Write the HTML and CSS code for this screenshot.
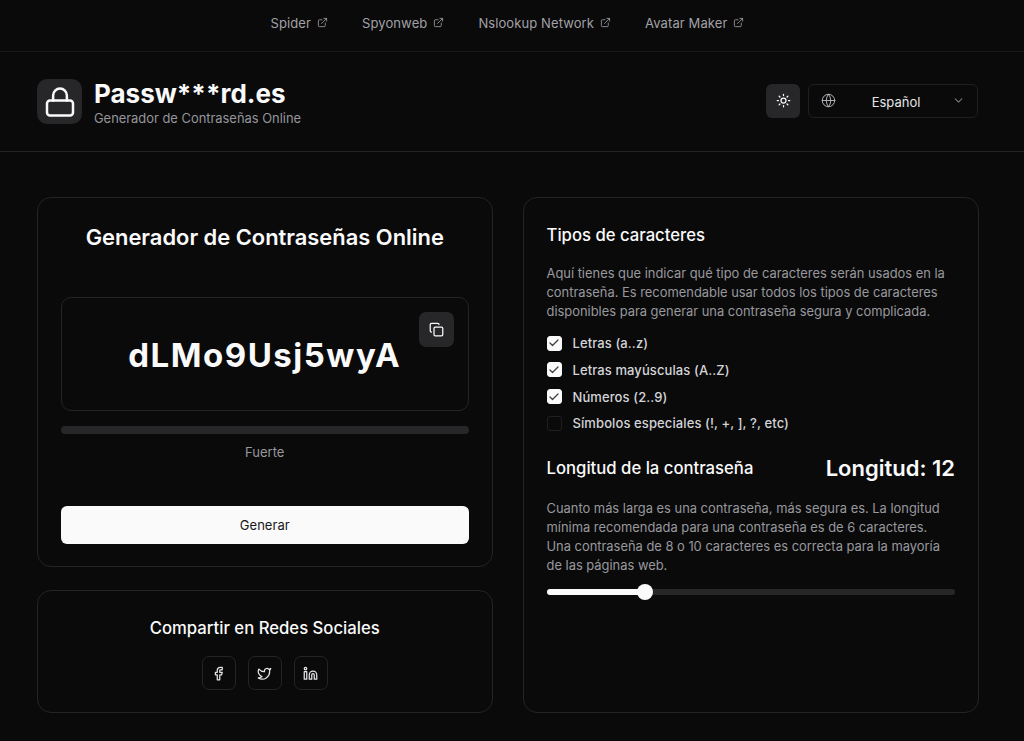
FILE: index.html
```html
<!DOCTYPE html>
<html lang="es">
  <head>
    <meta charset="UTF-8" />
    <meta name="viewport" content="width=device-width, initial-scale=1.0" />
    <title>Passw***rd.es</title>
    <link rel="stylesheet" href="styles.css">
  </head>
  <body>
    <nav class="topbar">
      <a class="toplink">Spider <svg viewBox="0 0 24 24"><path d="M18 13v6a2 2 0 0 1-2 2H5a2 2 0 0 1-2-2V8a2 2 0 0 1 2-2h6M15 3h6v6M10 14 21 3"/></svg></a>
      <a class="toplink">Spyonweb <svg viewBox="0 0 24 24"><path d="M18 13v6a2 2 0 0 1-2 2H5a2 2 0 0 1-2-2V8a2 2 0 0 1 2-2h6M15 3h6v6M10 14 21 3"/></svg></a>
      <a class="toplink">Nslookup Network <svg viewBox="0 0 24 24"><path d="M18 13v6a2 2 0 0 1-2 2H5a2 2 0 0 1-2-2V8a2 2 0 0 1 2-2h6M15 3h6v6M10 14 21 3"/></svg></a>
      <a class="toplink">Avatar Maker <svg viewBox="0 0 24 24"><path d="M18 13v6a2 2 0 0 1-2 2H5a2 2 0 0 1-2-2V8a2 2 0 0 1 2-2h6M15 3h6v6M10 14 21 3"/></svg></a>
    </nav>

    <header class="header">
      <div class="brand">
        <div class="brand_icon">
          <svg viewBox="0 0 24 24"><rect x="1.600" y="10.800" width="20.800" height="12" rx="2.400"/><path d="M6.500 10.800V6.700a5.500 5.500 0 0 1 11 0v4.100"/></svg>
        </div>
        <div>
          <div class="brand_name">Passw***rd.es</div>
          <div class="brand_sub">Generador de Contraseñas Online</div>
        </div>
      </div>
      <div class="header_tools">
        <button class="theme_btn">
          <svg viewBox="0 0 24 24"><circle cx="12" cy="12" r="4"/><path d="M12 2v2M12 20v2M4.930 4.930l1.410 1.410M17.660 17.660l1.410 1.410M2 12h2M20 12h2M6.340 17.660l-1.410 1.410M19.070 4.930l-1.410 1.410"/></svg>
        </button>
        <div class="lang">
          <svg class="lang_globe" viewBox="0 0 24 24"><circle cx="12" cy="12" r="10"/><path d="M2 12h20M12 2a15 15 0 0 1 0 20M12 2a15 15 0 0 0 0 20"/></svg>
          <span class="lang_name">Español</span>
          <svg class="lang_chevron" viewBox="0 0 24 24"><path d="m6 9 6 6 6-6"/></svg>
        </div>
      </div>
    </header>

    <main class="main">
      <div class="column">
        <section class="card generator">
          <h1>Generador de Contraseñas Online</h1>
          <div class="password_box">
            <span class="password">dLMo9Usj5wyA</span>
            <button class="copy_btn">
              <svg viewBox="0 0 24 24"><rect x="8" y="8" width="14" height="14" rx="2"/><path d="M4 16a2 2 0 0 1-2-2V4a2 2 0 0 1 2-2h10a2 2 0 0 1 2 2"/></svg>
            </button>
          </div>
          <div class="strength_bar"></div>
          <div class="strength_label">Fuerte</div>
          <button class="generate_btn">Generar</button>
        </section>

        <section class="card share">
          <h2>Compartir en Redes Sociales</h2>
          <div class="share_icons">
            <a class="share_btn"><svg viewBox="0 0 24 24"><path d="M18 2h-3a5 5 0 0 0-5 5v3H7v4h3v8h4v-8h3l1-4h-4V7a1 1 0 0 1 1-1h3z"/></svg></a>
            <a class="share_btn"><svg viewBox="0 0 24 24"><path d="M22 4s-.7 2.100-2 3.400c1.600 10-9.400 17.300-18 11.600 2.200.1 4.400-.6 6-2C3 15.500.5 9.600 3 5c2.200 2.600 5.600 4.100 9 4-.9-4.200 4-6.600 7-3.800 1.100 0 3-1.200 3-1.200z"/></svg></a>
            <a class="share_btn"><svg viewBox="0 0 24 24"><path d="M16 8a6 6 0 0 1 6 6v7h-4v-7a2 2 0 0 0-4 0v7h-4v-7a6 6 0 0 1 6-6z"/><rect x="2" y="9" width="4" height="12"/><circle cx="4" cy="4" r="2"/></svg></a>
          </div>
        </section>
      </div>

      <section class="card options">
        <h3>Tipos de caracteres</h3>
        <p>Aquí tienes que indicar qué tipo de caracteres serán usados en la contraseña. Es recomendable usar todos los tipos de caracteres disponibles para generar una contraseña segura y complicada.</p>
        <ul class="checks">
          <li><span class="box on"><svg viewBox="0 0 24 24"><path d="M20 6 9 17l-5-5"/></svg></span>Letras (a..z)</li>
          <li><span class="box on"><svg viewBox="0 0 24 24"><path d="M20 6 9 17l-5-5"/></svg></span>Letras mayúsculas (A..Z)</li>
          <li><span class="box on"><svg viewBox="0 0 24 24"><path d="M20 6 9 17l-5-5"/></svg></span>Números (2..9)</li>
          <li><span class="box"></span>Símbolos especiales (!, +, ], ?, etc)</li>
        </ul>
        <div class="length_head">
          <h3>Longitud de la contraseña</h3>
          <span class="length_value">Longitud: 12</span>
        </div>
        <p>Cuanto más larga es una contraseña, más segura es. La longitud mínima recomendada para una contraseña es de 6 caracteres. Una contraseña de 8 o 10 caracteres es correcta para la mayoría de las páginas web.</p>
        <div class="slider">
          <div class="slider_fill"><span class="slider_thumb"></span></div>
        </div>
      </section>
    </main>
  </body>
</html>
```

FILE: styles.css
```css
* {
  margin: 0;
  padding: 0;
  box-sizing: border-box;
}

body {
  background: #0a0a0b;
  color: #fafafa;
  font-family: Inter, "Liberation Sans", sans-serif;
  height: 741px;
  overflow: hidden;
}

svg {
  fill: none;
  stroke: currentColor;
  stroke-width: 2;
  stroke-linecap: round;
  stroke-linejoin: round;
  display: block;
}

button {
  border: none;
  font-family: inherit;
}

.topbar {
  height: 52px;
  border-bottom: 1px solid #1a1a1c;
  display: flex;
  justify-content: center;
  align-items: center;
  gap: 34px;
  padding: 0 9px 5px 0;
}

.toplink {
  display: flex;
  align-items: center;
  gap: 6px;
  font-size: 13px;
  letter-spacing: 0.1px;
  color: #a1a1a6;
}

.toplink svg {
  width: 11px;
  height: 11px;
  stroke-width: 1.8;
  margin-top: -2px;
}

.header {
  height: 100px;
  border-bottom: 1px solid #242426;
  padding: 0 46px 0 37px;
  display: flex;
  justify-content: space-between;
  align-items: center;
}

.brand {
  display: flex;
  align-items: center;
  gap: 12px;
}

.brand_icon {
  width: 45px;
  height: 45px;
  border-radius: 10px;
  background: #27272a;
  display: grid;
  place-items: center;
}

.brand_icon svg {
  width: 30px;
  height: 30px;
  stroke-width: 2;
}

.brand_name {
  font-size: 26px;
  font-weight: 700;
  line-height: 31px;
  margin-top: 2px;
}

.brand_sub {
  font-size: 12.900px;
  line-height: 18px;
  margin-top: 1px;
  color: #95959a;
}

.header_tools {
  display: flex;
  align-items: center;
  gap: 8px;
  margin-bottom: 2px;
}

.theme_btn {
  width: 34px;
  height: 34px;
  border-radius: 6px;
  background: #27272a;
  color: #fafafa;
  display: grid;
  place-items: center;
}

.theme_btn svg {
  width: 15px;
  height: 15px;
}

.lang {
  width: 170px;
  height: 34px;
  border: 1px solid #1f1f22;
  border-radius: 6px;
  display: flex;
  align-items: center;
  padding: 0 12px;
  font-size: 13px;
}

.lang_globe {
  width: 15px;
  height: 15px;
  stroke-width: 1.6;
  color: #b0b0b4;
}

.lang_name {
  flex: 1;
  text-align: center;
  padding: 2px 0 0 4px;
  color: #e4e4e7;
}

.lang_chevron {
  width: 13px;
  height: 13px;
  color: #77777c;
}

.main {
  padding: 45px 45px 0 37px;
  display: grid;
  grid-template-columns: 455.500px 455.500px;
  gap: 30.500px;
}

.column {
  display: flex;
  flex-direction: column;
  gap: 23px;
}

.card {
  border: 1px solid #242426;
  border-radius: 14px;
}

.generator {
  height: 370px;
  padding: 25px 22.500px 0;
}

.generator h1 {
  font-size: 21.900px;
  font-weight: 600;
  line-height: 28px;
  text-align: center;
  margin-bottom: 46px;
}

.password_box {
  position: relative;
  height: 114px;
  border: 1px solid #242426;
  border-radius: 10px;
  display: grid;
  place-items: center;
}

.password {
  font-size: 33px;
  font-weight: 700;
  letter-spacing: 1.500px;
  padding-top: 1px;
}

.copy_btn {
  position: absolute;
  top: 14px;
  right: 14px;
  width: 35px;
  height: 35px;
  border-radius: 7px;
  background: #27272a;
  color: #fafafa;
  display: grid;
  place-items: center;
}

.copy_btn svg {
  width: 15px;
  height: 15px;
}

.strength_bar {
  height: 8px;
  border-radius: 4px;
  background: #27272a;
  margin-top: 15px;
}

.strength_label {
  font-size: 13px;
  line-height: 18px;
  color: #98989d;
  text-align: center;
  margin-top: 9px;
}

.generate_btn {
  width: 100%;
  height: 38px;
  border-radius: 6px;
  background: #fafafa;
  color: #18181b;
  font-size: 13px;
  letter-spacing: 0.050px;
  margin-top: 45px;
}

.share {
  height: 123px;
  padding-top: 26px;
}

.share h2 {
  font-size: 16.700px;
  font-weight: 500;
  line-height: 22px;
  text-align: center;
}

.share_icons {
  display: flex;
  justify-content: center;
  gap: 12px;
  margin-top: 17px;
}

.share_btn {
  width: 34px;
  height: 34px;
  border: 1px solid #242426;
  border-radius: 7px;
  display: grid;
  place-items: center;
}

.share_btn svg {
  width: 15px;
  height: 15px;
  color: #e4e4e7;
}

.options {
  height: 516px;
  padding: 26px 22.500px 0;
}

.options h3 {
  font-size: 16.700px;
  font-weight: 500;
  line-height: 22px;
}

.options p {
  font-size: 12.900px;
  line-height: 19px;
  color: #98989d;
}

.options > h3 {
  margin-bottom: 18px;
}

.checks {
  list-style: none;
  margin-top: 9px;
}

.checks li {
  display: flex;
  align-items: center;
  gap: 11px;
  height: 26.670px;
  font-size: 13px;
  font-weight: 500;
  letter-spacing: 0.100px;
  color: #d4d4d8;
}

.box {
  width: 15px;
  height: 15px;
  border-radius: 3px;
  border: 1px solid #1f1f22;
  display: grid;
  place-items: center;
}

.box.on {
  background: #fafafa;
  border-color: #fafafa;
  color: #3f3f46;
}

.box svg {
  width: 12px;
  height: 12px;
  stroke-width: 2.600;
}

.length_head {
  display: flex;
  justify-content: space-between;
  align-items: center;
  margin-top: 18.500px;
  margin-bottom: 18px;
}

.length_value {
  font-size: 22px;
  font-weight: 600;
}

.slider {
  height: 6px;
  border-radius: 3px;
  background: #27272a;
  margin-top: 14px;
}

.slider_fill {
  position: relative;
  width: 24%;
  height: 100%;
  border-radius: 3px;
  background: #fafafa;
}

.slider_thumb {
  position: absolute;
  right: -8px;
  top: -5px;
  width: 16px;
  height: 16px;
  border-radius: 50%;
  background: #fafafa;
}
```
